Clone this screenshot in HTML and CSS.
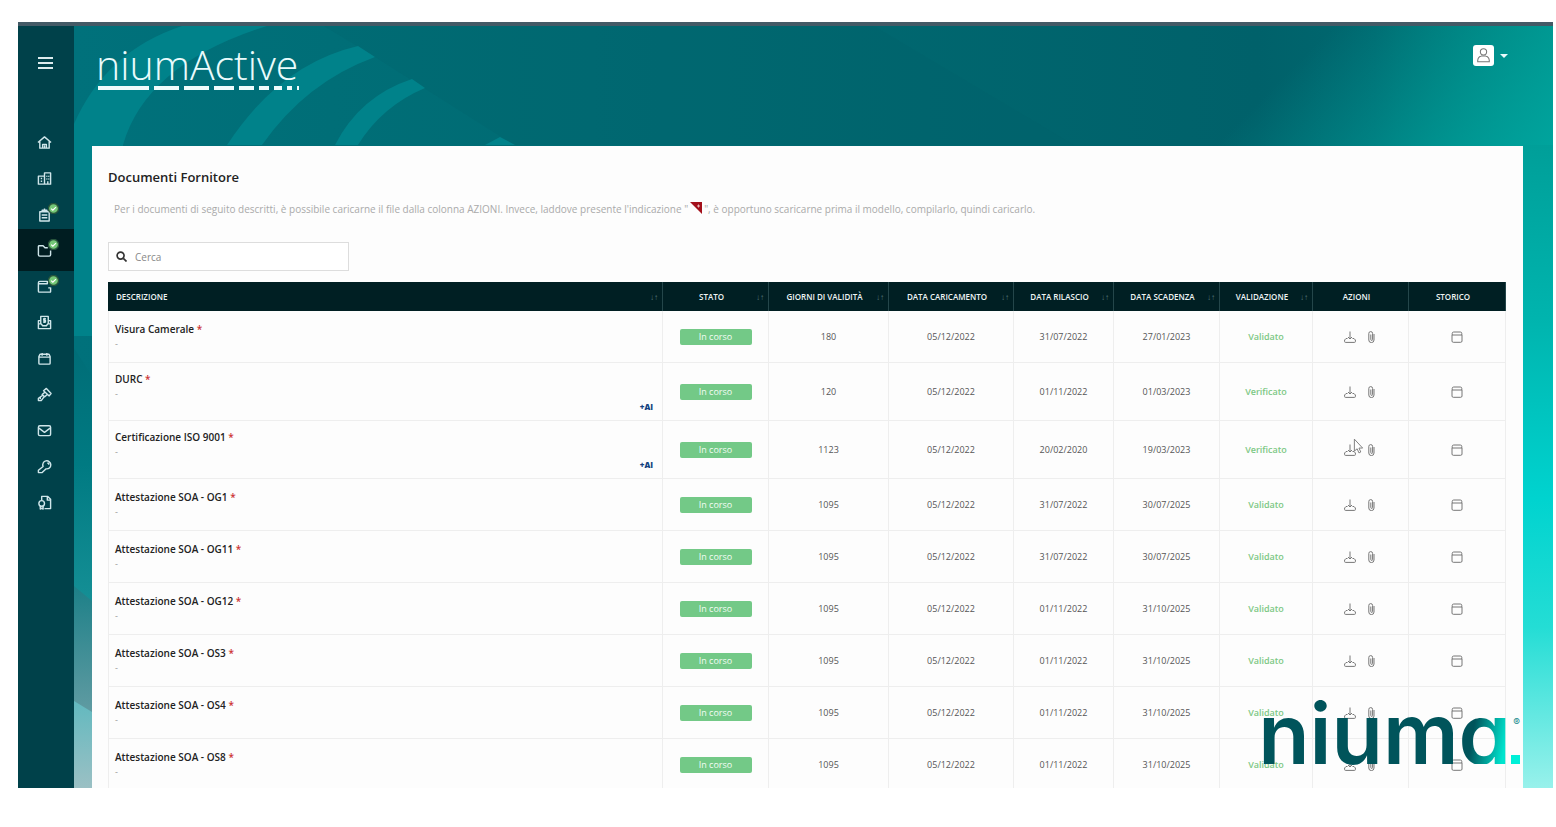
FILE: index.html
```html
<!DOCTYPE html>
<html lang="it">
<head>
<meta charset="utf-8">
<title>niumActive - Documenti Fornitore</title>
<link rel="stylesheet" href="styles.css">
</head>
<body>
<svg class="defs" aria-hidden="true">
  <symbol id="down" viewBox="0 0 12 12"><path d="M6 .5v7.500M4 6l2 2 2-2M3.500 7.500H2L.6 9v1.500q0 .9.900.9h9q.9 0 .9-.9V9L10 7.500H8.500"/></symbol>
  <symbol id="clip" viewBox="0 0 12 12"><path d="M9 3v6a2.600 2.600 0 0 1-5.200 0V2.500a1.900 1.900 0 0 1 3.800 0V8.500a.9.900 0 0 1-1.800 0V3.500"/></symbol>
  <symbol id="cal" viewBox="0 0 12 12"><path d="M1 4h10M1.200 4V2.500q0-1.500 1.500-1.500h6.600q1.500 0 1.500 1.500V4M1 4v6q0 1.300 1.300 1.300h7.400q1.300 0 1.300-1.300V4"/></symbol>
  <symbol id="ok" viewBox="0 0 12 12"><circle cx="6" cy="6" r="5.500" fill="#74c777" stroke="#28543c"/><path d="M3.500 6.200l1.700 1.700L8.700 4.400" fill="none" stroke="#fff" stroke-width="1.200"/></symbol>
</svg>
<div class="frame">
  <nav class="side">
    <button class="burger" aria-label="Menu"><span></span><span></span><span></span></button>
    <a class="item" href="#" aria-label="Home"><svg viewBox="0 0 16 16"><path d="M1 8l7-6 7 6M3 7v7h10V7M6 14v-4h4v4M8 11v3"/></svg></a>
    <a class="item" href="#" aria-label="Azienda"><svg viewBox="0 0 16 16"><path d="M1.500 14V5.500H8V14zM8 14V2h6.500v12zM4 8h1.500M4 11h1.500M10.500 5v1M12.500 5v1M10.500 8v1M12.500 8v1M11.500 14v-3"/></svg></a>
    <a class="item" href="#" aria-label="Questionari"><svg viewBox="0 0 16 16"><path d="M3 5h10v10H3zM5.500 5V3.500h5V5M8 1.500v2M5 8.500h6M5 11.500h6"/></svg><svg class="ok"><use href="#ok"/></svg></a>
    <a class="item active" href="#" aria-label="Documenti"><svg viewBox="0 0 16 16"><path d="M14.500 8v4.500q0 1.500-1.500 1.500H3q-1.500 0-1.500-1.500v-9Q1.500 3 2.500 3h4l2 2h3"/></svg><svg class="ok"><use href="#ok"/></svg></a>
    <a class="item" href="#" aria-label="Portafoglio"><svg viewBox="0 0 16 16"><path d="M14.500 9v4.500q0 .5-1 .5H2.500q-1 0-1-1V4q0-1.500 1.500-1.500h8V5H2M12 9.500h2.500"/></svg><svg class="ok"><use href="#ok"/></svg></a>
    <a class="item" href="#" aria-label="Pagamenti"><svg viewBox="0 0 16 16"><path d="M4 9V1.500h8V9M4 6H1.500v8.500h13V6H12M1.500 9.500h3l1.500 2h4l1.500-2h3M9.500 4H7.200v1.700h1.800v1.800H6.500M8 3v5.500"/></svg></a>
    <a class="item" href="#" aria-label="Calendario"><svg viewBox="0 0 16 16"><path d="M2 6l1.200-2.500h9.600L14 6v7q0 1-1 1H3q-1 0-1-1zM2 6.500h12M5.500 2v3M10.500 2v3"/></svg></a>
    <a class="item" href="#" aria-label="Gare"><svg viewBox="0 0 16 16"><path d="M7 4l3-2.500 5 5.500-2 2.500zM8.500 5.500L5.500 8l2.500 2.500L11 8M6 9l-4.500 3 0 2.500 3 0L7.500 10.500M3.500 11v2"/></svg></a>
    <a class="item" href="#" aria-label="Messaggi"><svg viewBox="0 0 16 16"><rect x="1.500" y="3" width="13" height="10.500" rx="1.500"/><path d="M2 5.500l6 4.500 6-4.500"/></svg></a>
    <a class="item" href="#" aria-label="Accesso"><svg viewBox="0 0 16 16"><path d="M6.500 8a4.300 4.300 0 1 1 3.200 2.500L5.500 14.500H1.500V12zM11 4.500h1.500V6"/></svg></a>
    <a class="item" href="#" aria-label="Certificati"><svg viewBox="0 0 16 16"><path d="M5 6V1.500h6.500l3 3v10H8M11 1.500v4h3.500"/><circle cx="5" cy="9" r="3"/><path d="M3.500 11.500v3.500l1.500-1 1.500 1v-3.500"/></svg></a>
  </nav>
  <div class="main">
    <svg class="scene" viewBox="0 0 1479 762" preserveAspectRatio="none" aria-hidden="true">
      <defs>
        <linearGradient id="sky"><stop offset="0" stop-color="#00717b"/><stop offset=".35" stop-color="#006b73"/><stop offset=".8" stop-color="#00616a"/><stop offset=".88" stop-color="#00686f"/><stop offset="1" stop-color="#008580"/></linearGradient>
        <linearGradient id="corner" gradientUnits="userSpaceOnUse" x1="1250" y1="10" x2="1440" y2="200"><stop offset="0" stop-color="#00a69f" stop-opacity="0"/><stop offset="1" stop-color="#00a8a1"/></linearGradient>
        <linearGradient id="east" x2="0" y2="1"><stop offset="0" stop-color="#009f99"/><stop offset=".27" stop-color="#00b4ae"/><stop offset=".55" stop-color="#00d3cf"/><stop offset=".75" stop-color="#24ddd5"/><stop offset="1" stop-color="#98f1eb"/></linearGradient>
        <linearGradient id="west" x2="0" y2="1"><stop offset="0" stop-color="#006d77"/><stop offset=".45" stop-color="#007a82"/><stop offset="1" stop-color="#159096"/></linearGradient>
        <linearGradient id="grey" x2="0" y2="1"><stop offset="0" stop-color="#1d8088"/><stop offset="1" stop-color="#629ca3"/></linearGradient>
        <linearGradient id="pale" x2="0" y2="1"><stop offset="0" stop-color="#62b9bf"/><stop offset="1" stop-color="#9bc0c4"/></linearGradient>
      </defs>
      <rect width="1479" height="762" fill="url(#sky)"/>
      <path d="M301 31L440 119H1000L800 0H250z" fill="#005f69" opacity=".2"/>
      <rect x="1000" width="479" height="200" fill="url(#corner)"/>
      <path d="M0 98Q32 25 108 0H193Q72 38 49 119V310H0z" fill="#00828a"/>
      <path d="M153 119Q206 38 284 20L301 31Q232 56 188 119zM261 119Q286 70 338 53L351 62Q308 80 284 119zM411 119L426 111L441 119z" fill="#00828a"/>
      <path d="M0 322L18 350V580H0z" fill="url(#west)"/>
      <path d="M0 560L18 575V690H0z" fill="url(#grey)"/>
      <path d="M0 675L18 686V762H0z" fill="url(#pale)"/>
      <rect x="1448" y="119" width="31" height="643" fill="url(#east)"/>
    </svg>
    <header class="top">
      <div class="brand"><span class="name">niumActive</span>
        <div class="dashes"><i class="d1"></i><i class="d2"></i><i class="d2"></i><i class="d3"></i><i class="d4"></i><i class="d5"></i><i class="d6"></i><i class="d7"></i><i class="d8"></i></div>
      </div>
      <button class="user" aria-label="Profilo utente"><svg viewBox="0 0 20 20"><circle cx="10" cy="6.500" r="3"/><path d="M7.500 10.500h5M4.500 16v-1.500q.5-3.500 3.500-4M15.500 16v-1.500q-.5-3.500-3.500-4M4 16h12"/></svg><span class="caret"></span></button>
    </header>
    <main class="panel">
      <h1>Documenti Fornitore</h1>
      <p class="hint">Per i documenti di seguito descritti, è possibile caricarne il file dalla colonna AZIONI. Invece, laddove presente l'indicazione "<svg viewBox="0 0 12 12" role="img" aria-label="modello"><path d="M0 0h12v12z" fill="#a3101b"/><path d="M8.500 2.500v3M7 4h3" stroke="#e8b9bc"/></svg>", è opportuno scaricarne prima il modello, compilarlo, quindi caricarlo.</p>
      <label class="search"><svg viewBox="0 0 12 12"><circle cx="5" cy="5" r="3.800"/><path d="M8 8l3.500 3.500"/></svg><input type="text" placeholder="Cerca" aria-label="Cerca"></label>
      <table>
        <colgroup><col><col class="w106"><col class="w120"><col class="w125"><col class="w100"><col class="w106"><col class="w93"><col class="w96"><col class="w97"></colgroup>
        <thead><tr><th class="first">DESCRIZIONE<span>↓↑</span></th><th>STATO<span>↓↑</span></th><th>GIORNI DI VALIDITÀ<span>↓↑</span></th><th>DATA CARICAMENTO<span>↓↑</span></th><th>DATA RILASCIO<span>↓↑</span></th><th>DATA SCADENZA<span>↓↑</span></th><th>VALIDAZIONE<span>↓↑</span></th><th>AZIONI</th><th>STORICO</th></tr></thead>
        <tbody id="rows"></tbody>
      </table>
    </main>
  </div>
  <svg class="cursor" viewBox="0 0 12 18" aria-hidden="true"><path d="M1.500 1v13l3-2.500 2 4.500 2-1-2-4.300h4z" fill="#fff" stroke="#777"/></svg>
  <div class="mark"><span>nium</span><span class="a">a</span><i class="sq"></i><sup>®</sup></div>
</div>
<script src="rows.js"></script>
</body>
</html>
```
FILE: rows.js
```js
const docs = [
  ["Visura Camerale", "180", "31/07/2022", "27/01/2023", "Validato", false],
  ["DURC", "120", "01/11/2022", "01/03/2023", "Verificato", true],
  ["Certificazione ISO 9001", "1123", "20/02/2020", "19/03/2023", "Verificato", true],
  ["Attestazione SOA - OG1", "1095", "31/07/2022", "30/07/2025", "Validato", false],
  ["Attestazione SOA - OG11", "1095", "31/07/2022", "30/07/2025", "Validato", false],
  ["Attestazione SOA - OG12", "1095", "01/11/2022", "31/10/2025", "Validato", false],
  ["Attestazione SOA - OS3", "1095", "01/11/2022", "31/10/2025", "Validato", false],
  ["Attestazione SOA - OS4", "1095", "01/11/2022", "31/10/2025", "Validato", false],
  ["Attestazione SOA - OS8", "1095", "01/11/2022", "31/10/2025", "Validato", false]
];
const icon = (id, label) =>
  `<button class="act" aria-label="${label}"><svg><use href="#${id}"/></svg></button>`;
document.getElementById("rows").innerHTML = docs.map(([name, days, issued, expiry, check, ai]) => `
  <tr class="${ai ? "tall" : ""}">
    <td class="desc"><b>${name} <em>*</em></b><small>-</small>${ai ? '<strong class="ai">+AI</strong>' : ""}</td>
    <td><span class="badge">In corso</span></td>
    <td>${days}</td><td>05/12/2022</td><td>${issued}</td><td>${expiry}</td>
    <td class="valid">${check}</td>
    <td><div class="acts">${icon("down", "Scarica")}${icon("clip", "Allega")}</div></td>
    <td>${icon("cal", "Storico")}</td>
  </tr>`).join("");
```
FILE: styles.css
```css
* { box-sizing: border-box; }
body {
  margin: 0;
  padding: 22px 3px 0 18px;
  background: #fff;
  font-family: "Open Sans", "Noto Sans", sans-serif;
  color: #555;
}
button { border: 0; padding: 0; background: none; font: inherit; }
.defs { display: none; }
.frame {
  position: relative;
  display: flex;
  height: calc(100vh - 61px);
  overflow: hidden;
  border-top: 4px solid #445a66;
}
.side {
  display: flex;
  flex-direction: column;
  flex: none;
  width: 56px;
  background: #00414a;
}
.burger {
  display: flex;
  flex-direction: column;
  gap: 3px;
  width: 15px;
  margin: 31px 0 55px 20px;
}
.burger span { height: 2px; background: #dcebed; }
.item {
  position: relative;
  display: flex;
  flex: none;
  align-items: center;
  height: 36px;
  padding-left: 19px;
}
.item.active {
  height: 42px;
  margin: -3px 0;
  background: #001d21;
}
.item svg {
  width: 15px;
  height: 15px;
  fill: none;
  stroke: #cfe6ea;
  stroke-width: 1.5;
  stroke-linejoin: round;
}
.item .ok {
  position: absolute;
  left: 30px;
  top: 7px;
  width: 11px;
  height: 11px;
}
.item.active .ok { top: 10px; }
.main {
  position: relative;
  display: flex;
  flex-direction: column;
  flex: 1;
  min-width: 0;
  background: #00717b;
}
.scene { position: absolute; inset: 0; width: 100%; height: 100%; }
.top {
  position: relative;
  display: flex;
  flex: none;
  justify-content: space-between;
  align-items: flex-start;
  height: 120px;
  padding: 16px 45px 0 22px;
}
.name {
  display: block;
  font-size: 41px;
  font-weight: 300;
  line-height: 44px;
  color: #e9fbfc;
}
.dashes { display: flex; gap: 5px; padding-left: 2px; }
.dashes i { height: 4px; background: #effcfc; }
.d1 { width: 51px; }
.d2 { width: 25px; }
.d3 { width: 20px; }
.d4 { width: 15px; }
.d5 { width: 10px; }
.d6 { width: 8px; }
.d7 { width: 5px; }
.d8 { width: 2px; }
.user { display: flex; align-items: center; gap: 6px; margin-top: 3px; }
.user svg {
  width: 21px;
  height: 21px;
  border-radius: 3px;
  background: #fff;
  fill: none;
  stroke: #777;
}
.caret {
  border: 4px solid transparent;
  border-top-color: #e9fbfc;
  border-bottom: 0;
}
.panel {
  position: relative;
  flex: none;
  margin: 0 30px 0 18px;
  padding: 22px 17px 0 16px;
  background: #fdfdfd;
}
h1 { margin: 0; font-size: 13px; line-height: 18px; font-weight: 600; color: #222; }
.hint { margin: 14px 0 0; padding-left: 6px; font-size: 10px; line-height: 18px; color: #aaa; white-space: nowrap; }
.hint svg { width: 12px; height: 12px; margin: 0 2px; vertical-align: -1px; }
.search {
  display: flex;
  align-items: center;
  gap: 8px;
  width: 241px;
  height: 29px;
  margin: 24px 0 11px;
  padding: 0 7px;
  border: 1px solid #ddd;
  background: #fff;
}
.search svg { flex: none; width: 11px; height: 11px; fill: none; stroke: #333; stroke-width: 1.8; }
.search input { width: 100%; border: 0; padding: 0; outline: 0; background: none; font: 10px "Open Sans", sans-serif; }
.search input::placeholder { color: #888; }
table { width: 100%; table-layout: fixed; border-collapse: separate; border-spacing: 0; }
.w93 { width: 93px; }
.w96 { width: 96px; }
.w97 { width: 97px; }
.w100 { width: 100px; }
.w106 { width: 106px; }
.w120 { width: 120px; }
.w125 { width: 125px; }
th {
  position: relative;
  height: 29px;
  padding: 0 20px 0 12px;
  border-right: 1px solid #24464a;
  background: #001f23;
  font-size: 8px;
  font-weight: 600;
  white-space: nowrap;
  color: #eef4f4;
}
th.first { padding-left: 8px; text-align: left; }
th span { position: absolute; right: 4px; color: #56757a; font-weight: 400; }
td {
  height: 52px;
  padding: 0;
  border: 1px solid #eee;
  border-width: 0 1px 1px 0;
  text-align: center;
  font-size: 9px;
}
.tall td { height: 58px; }
.desc { position: relative; padding: 10px 7px 0 6px; border-left-width: 1px; text-align: left; vertical-align: top; }
.tall .desc { padding-top: 8px; }
.desc b { display: block; font-size: 10px; line-height: 16px; font-weight: 600; color: #222; }
.desc em { font-style: normal; color: #c33; }
.desc small { display: block; font-size: 9px; line-height: 14px; color: #999; }
.ai { position: absolute; right: 9px; bottom: 8px; font-size: 8px; font-weight: 800; color: #12417f; }
.badge {
  display: block;
  width: 72px;
  margin: 0 auto;
  border-radius: 2px;
  background: #73c987;
  line-height: 16px;
  color: #f3fcf5;
}
.valid { color: #7cc884; font-weight: 600; }
.acts { display: flex; justify-content: center; gap: 9px; }
.act svg { display: block; width: 12px; height: 12px; fill: none; stroke: #777; stroke-width: 1; }
.act { display: inline-block; vertical-align: middle; }
.cursor { position: absolute; left: 1335px; top: 412px; width: 11px; height: 17px; }
.mark {
  position: absolute;
  right: 33px;
  bottom: 24px;
  display: flex;
  align-items: flex-end;
  font-family: Inter, sans-serif;
  font-size: 84px;
  line-height: 60px;
  font-weight: 600;
  color: #00545b;
  font-feature-settings: "cv11";
}
.mark .a { background: linear-gradient(100deg, #00545b 30%, #00e5cf 85%); background-clip: text; color: transparent; }
.mark .sq { width: 9px; height: 9px; background: #00f0d8; }
.mark sup { position: absolute; right: 0; top: 12px; font-size: 10px; line-height: 12px; font-weight: 400; color: #158a8c; }
```
